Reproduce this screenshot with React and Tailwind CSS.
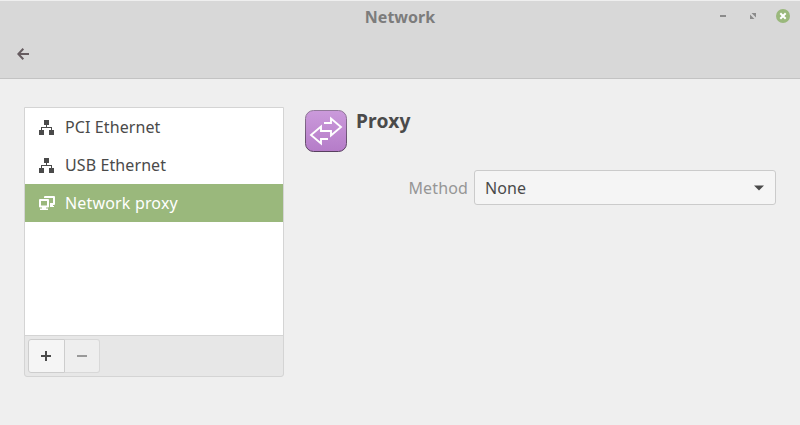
const font = "font-['Noto_Sans',sans-serif]";

function WiredIcon() {
  return (
    <svg width="15" height="15" viewBox="0 0 15 15" fill="#4a4a4a" shapeRendering="crispEdges">
      <path d="M5 0h5v5H5zM0 10h5v5H0zM10 10h5v5h-5zM7 5h1v2h5v3h-1V8H3v2H2V7h5z" />
    </svg>
  );
}

function ProxyListIcon() {
  return (
    <svg width="16" height="14" viewBox="0 0 16 14" fill="none">
      <path d="M6 2V1h9v7h-4" stroke="#fff" strokeWidth="2" strokeLinejoin="round" />
      <path d="M11 9h3v1h1v1h-4z" fill="#fff" />
      <rect x="1" y="4" width="8" height="6.500" stroke="#fff" strokeWidth="2" strokeLinejoin="round" />
      <path d="M3 11h4v1.500h2V14H1v-1.500h2z" fill="#fff" />
    </svg>
  );
}

function ProxyIcon() {
  return (
    <svg width="42" height="42" viewBox="0 0 42 42" fill="none">
      <defs>
        <linearGradient id="face" x1="0" y1="0" x2="0" y2="1">
          <stop offset="0" stopColor="#cb9adb" />
          <stop offset="1" stopColor="#b57cc8" />
        </linearGradient>
        <linearGradient id="edge" x1="0" y1="0" x2="0" y2="1">
          <stop offset="0" stopColor="#92799a" />
          <stop offset="1" stopColor="#58405f" />
        </linearGradient>
      </defs>
      <rect x="0.5" y="0.5" width="41" height="41" rx="8" fill="url(#face)" stroke="url(#edge)" />
      <path
        d="M19 13h7V8.500L36 17l-10 8.500V21H16v-4.500L6 25l10 8.500V29h7"
        stroke="#fff"
        strokeWidth="1.900"
      />
    </svg>
  );
}

function Row({ icon, label, selected }) {
  return (
    <li className={`flex h-[38px] items-center pl-[14px] tracking-[0.1px] ${selected ? "bg-[#9ab87c] text-white" : "text-[#4a4a4a]"}`}>
      <span className="flex w-[26px]">{icon}</span>
      <span className={selected ? "tracking-[0.17px]" : ""}>{label}</span>
    </li>
  );
}

export default function App() {
  return (
    <div className={`flex h-[425px] w-[800px] flex-col overflow-hidden bg-[#efefef] text-base text-[#4a4a4a] ${font}`}>
      <header className="h-[79px] shrink-0 border-t border-b border-t-[#efefef] border-b-[#c3c3c3] bg-[#d8d8d8]">
        <div className="grid h-8 grid-cols-[1fr_auto_1fr] items-center">
          <span />
          <h1 className="text-base font-bold text-[#7c7c7c]">Network</h1>
          <div className="flex h-full items-center justify-end pr-[10px] pb-[2px]">
            <svg width="6" height="2" className="mr-6"><path d="M0 0h6v2H0z" fill="#8b8b8b" /></svg>
            <svg width="6" height="6" viewBox="0 0 6 6" className="mr-5">
              <path d="M1.500 0H6v4.500zM0 1.500V6h4.500z" fill="#8b8b8b" />
            </svg>
            <svg width="14" height="14" viewBox="0 0 14 14">
              <circle cx="7" cy="7" r="7" fill="#9ab87c" />
              <path d="M4.300 4.300l5.400 5.400M9.700 4.300l-5.400 5.400" stroke="#fff" strokeWidth="2" />
            </svg>
          </div>
        </div>
        <button className="mt-[15px] ml-[17px] block">
          <svg width="12" height="12" viewBox="0 0 12 12" fill="none" stroke="#665c60" strokeWidth="2">
            <path d="M1 6h11M6.300 0.700L1.300 6l5 5.300" />
          </svg>
        </button>
      </header>
      <main className="flex pt-7 pl-6">
        <aside className="flex h-[270px] w-[260px] flex-col rounded-b-[3px] border border-[#d4d4d4] bg-[#e7e7e7]">
          <ul className="box-content h-[227px] border-b border-[#d4d4d4] bg-white">
            <Row icon={<WiredIcon />} label="PCI Ethernet" />
            <Row icon={<WiredIcon />} label="USB Ethernet" />
            <Row icon={<ProxyListIcon />} label="Network proxy" selected />
          </ul>
          <div className="flex pt-[3px] pl-[3px]">
            <button className="flex h-[34px] w-[37px] items-center justify-center rounded-l-[3px] border border-[#cdcdcd] bg-[#f5f5f5] pr-px">
              <svg width="10" height="10"><path d="M4 0h2v4h4v2H6v4H4V6H0V4h4z" fill="#4a4a4a" /></svg>
            </button>
            <button className="flex h-[34px] w-[35px] items-center justify-center rounded-r-[3px] border border-l-0 border-[#d8d8d8] bg-[#eeeeee]">
              <svg width="10" height="2"><path d="M0 0h10v2H0z" fill="#999" /></svg>
            </button>
          </div>
        </aside>
        <section className="ml-[21px] w-[471px] pt-[3px]">
          <div className="flex h-[60px]">
            <ProxyIcon />
            <h2 className="-mt-[3px] ml-[9px] text-[19.2px] leading-7 font-bold tracking-[0.2px]">Proxy</h2>
          </div>
          <div className="flex items-center justify-end">
            <span className="mr-[6px] tracking-[0.15px] text-[#969696]">Method</span>
            <button className="flex h-[35px] w-[302px] items-center justify-between rounded-[3px] border border-[#cbcbcb] bg-[#f5f5f5] pr-[11px] pl-[10px]">
              <span className="tracking-[0.1px]">None</span>
              <svg width="10" height="6"><path d="M0 0.500h10L5 5.500z" fill="#4a4a4a" /></svg>
            </button>
          </div>
        </section>
      </main>
    </div>
  );
}
